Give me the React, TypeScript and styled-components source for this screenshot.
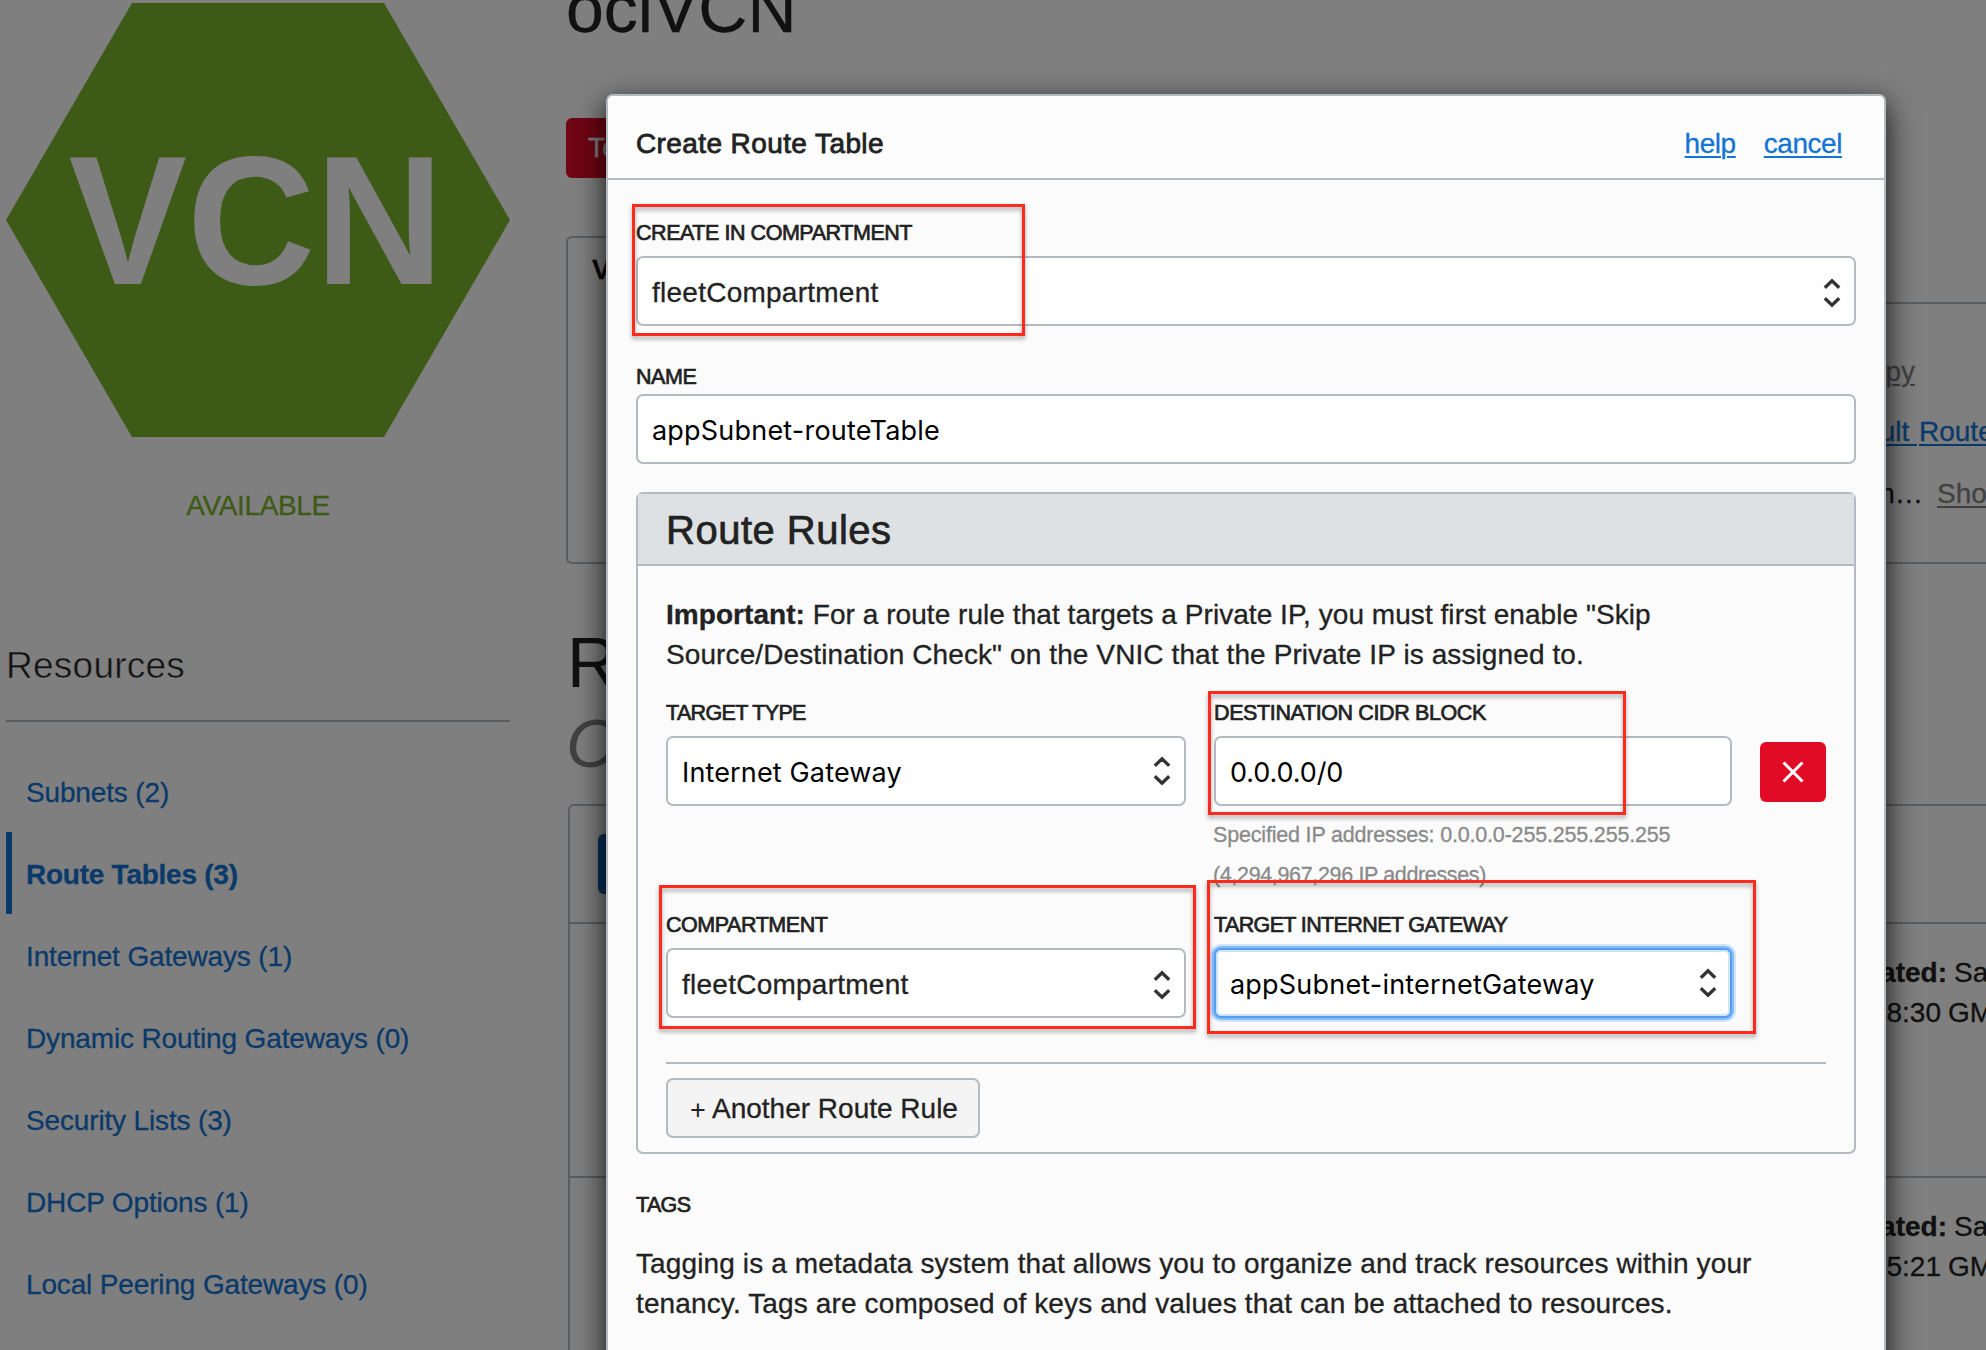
import React from 'react';
import styled, { createGlobalStyle, css } from 'styled-components';

const SANS = '"Liberation Sans", Arial, sans-serif';
const CONTROL = 'Inter, "Liberation Sans", sans-serif';
const BLUE = '#1474d4';
const LINE = '#b5bac0';
const INK = '#222';

const GlobalStyle = createGlobalStyle`
  *, *::before, *::after { box-sizing: border-box; }
  body { margin: 0; background: #fff; overflow: hidden; }
`;

/* ---------- page behind the dialog ---------- */

const Screen = styled.div`
  position: relative;
  width: 1986px;
  height: 1350px;
  overflow: hidden;
  background: #fff;
  font: 28px/40px ${SANS};
  color: ${INK};
  -webkit-text-stroke-width: 0.3px;
`;

const Page = styled.div`
  display: grid;
  grid-template-columns: 504px 1fr;
  column-gap: 56px;
  height: 1350px;
  padding-left: 6px;
`;

const Sidebar = styled.aside`
  padding-top: 3px;
`;

const Hexagon = styled.svg`
  display: block;
  width: 504px;
  height: 434px;
`;

const Status = styled.div`
  margin-top: 49px;
  line-height: 40px;
  text-align: center;
  color: #7ab42c;
  letter-spacing: -0.35px;
`;

const ResourcesTitle = styled.h2`
  margin: 119px 0 0;
  height: 77px;
  padding-top: 1px;
  border-bottom: 2px solid ${LINE};
  font-size: 37px;
  font-weight: 400;
  line-height: 40px;
  letter-spacing: 0.25px;
  -webkit-text-stroke: 0.5px #fff;
`;

const Nav = styled.nav`
  display: flex;
  flex-direction: column;
  margin-top: 28px;
`;

const NavItem = styled.a<{ $active?: boolean }>`
  height: 82px;
  padding: 3px 0 0 14px;
  border-left: 6px solid ${(p) => (p.$active ? BLUE : 'transparent')};
  line-height: 80px;
  color: ${BLUE};
  font-weight: ${(p) => (p.$active ? 700 : 400)};
  letter-spacing: ${(p) => (p.$active ? '-0.25px' : '-0.15px')};
  white-space: nowrap;
`;

const Main = styled.main`
  display: flex;
  flex-direction: column;
  min-width: 0;
  white-space: nowrap;
`;

const PageTitle = styled.h1`
  margin: -32px 0 0;
  height: 150px;
  font-size: 68px;
  font-weight: 400;
  line-height: 80px;
`;

const Terminate = styled.button`
  align-self: flex-start;
  height: 60px;
  padding: 0 22px;
  border: 0;
  border-radius: 6px;
  background: #e10b26;
  color: #fff;
  font: 28px/60px ${SANS};
`;

/* The open tab covers the panel's top edge so the two read as one box. */
const Tab = styled.div`
  position: relative;
  align-self: flex-start;
  height: 68px;
  margin: 58px 0 -2px;
  padding: 9px 24px 0;
  border: 2px solid ${LINE};
  border-bottom: 0;
  border-radius: 6px 6px 0 0;
  background: #fff;
  font-weight: 700;
  line-height: 46px;
  color: #111;
`;

const InfoPanel = styled.section`
  display: flex;
  flex-direction: column;
  height: 262px;
  padding-top: 48px;
  border: solid ${LINE};
  border-width: 2px 0 2px 2px;
  border-radius: 0 0 0 6px;
`;

const Fact = styled.div<{ $top?: number }>`
  display: grid;
  grid-template-columns: 1347px 1fr;
  margin-top: ${(p) => p.$top ?? 0}px;
`;

const FactEnd = styled.div<{ $spacing?: number; $shift?: number }>`
  text-align: right;
  letter-spacing: ${(p) => p.$spacing ?? 0}px;
  margin-right: ${(p) => -(p.$shift ?? 0)}px;
`;

const PageLink = styled.a<{ $muted?: boolean; $gap?: number }>`
  margin-left: ${(p) => p.$gap ?? 0}px;
  color: ${(p) => (p.$muted ? '#858585' : BLUE)};
  text-decoration: underline;
  text-decoration-thickness: 2px;
  text-underline-offset: 3px;
`;

const SectionTitle = styled.h2`
  margin: 59px 0 0 1px;
  height: 79px;
  font-size: 70px;
  font-weight: 400;
  line-height: 80px;
  -webkit-text-stroke-width: 0;
`;

const SectionScope = styled.div`
  height: 102px;
  font-size: 69px;
  font-style: italic;
  line-height: 84px;
  color: #858585;
  -webkit-text-stroke-width: 0;
`;

const List = styled.section`
  flex: 1;
  margin-left: 2px;
  border: solid ${LINE};
  border-width: 2px 0 0 2px;
  border-radius: 6px 0 0 0;
`;

const Toolbar = styled.div`
  height: 118px;
  padding: 28px;
  border-bottom: 2px solid ${LINE};
`;

const CreateButton = styled.button`
  display: block;
  width: 250px;
  height: 60px;
  border: 0;
  border-radius: 6px;
  background: #0a64b4;
`;

const Record = styled.div`
  display: grid;
  grid-template-columns: 1377px 1fr;
  column-gap: 7px;
  height: 254px;
  padding-top: 29px;
  border-bottom: 2px solid ${LINE};
  align-content: start;

  & > :nth-child(odd) { text-align: right; }
`;

const Time = styled.span`
  padding-right: 6px;
`;

const Zone = styled.span`
  margin-left: -6px;
`;

/* ---------- dialog ---------- */

const Backdrop = styled.div`
  position: absolute;
  inset: 0;
  padding: 94px 0 0 606px;
  background: rgba(0, 0, 0, 0.502);
`;

const Dialog = styled.div`
  width: 1280px;
  height: 1300px;
  border: 2px solid ${LINE};
  border-radius: 7px;
  background: #fbfbfb;
  box-shadow: 0 10px 30px rgba(0, 0, 0, 0.88);
`;

const DialogHeader = styled.header`
  display: flex;
  align-items: center;
  height: 84px;
  padding: 13px 42px 0 28px;
  border-bottom: 2px solid ${LINE};
  border-radius: 5px 5px 0 0;
  background: #fdfdfd;
`;

const DialogTitle = styled.h3`
  flex: 1;
  margin: 0;
  font-size: 28px;
  font-weight: 400;
  line-height: 40px;
  letter-spacing: 0.4px;
  -webkit-text-stroke: 0.8px ${INK};
`;

const DialogLink = styled.a`
  margin-left: 28px;
  color: ${BLUE};
  letter-spacing: -0.45px;
  text-decoration: underline;
  text-decoration-thickness: 2px;
  text-underline-offset: 3px;
`;

const DialogBody = styled.div`
  padding: 32px 28px 0;
`;

const Label = styled.div<{ $top?: number; $gap?: number; $spacing?: number }>`
  margin: ${(p) => p.$top ?? 0}px 0 ${(p) => p.$gap ?? 3}px;
  padding-top: 1px;
  font-size: 21.5px;
  line-height: 40px;
  letter-spacing: ${(p) => p.$spacing ?? -0.45}px;
  white-space: nowrap;
  -webkit-text-stroke: 0.7px ${INK};
`;

const focusRing = css`
  border-color: #559ff3;
  box-shadow: 0 0 0 2px #86bbf8, 0 0 0 4px #d0e4fc, inset 0 0 0 2px #cfe4fc;
`;

const Field = styled.div<{ $native?: boolean; $focused?: boolean; $spacing?: number }>`
  display: flex;
  align-items: center;
  justify-content: space-between;
  height: 70px;
  padding: 3px 14px 0;
  border: 2px solid ${LINE};
  border-radius: 7px;
  background: #fff;
  font-family: ${(p) => (p.$native ? CONTROL : SANS)};
  font-size: ${(p) => (p.$native ? 27 : 28)}px;
  color: ${(p) => (p.$native ? '#000' : INK)};
  letter-spacing: ${(p) => p.$spacing ?? 0}px;
  ${(p) => p.$native && '-webkit-text-stroke-width: 0;'}
  ${(p) => p.$focused && focusRing}
`;

const ArrowsSvg = styled.svg<{ $raised?: boolean }>`
  display: block;
  width: 18px;
  height: 30px;
  margin: ${(p) => (p.$raised ? '-3px' : '1px')} -1px 0 auto;
`;

const Arrows = ({ raised }: { raised?: boolean }) => (
  <ArrowsSvg $raised={raised} viewBox="0 0 18 30" fill="none" stroke="#333" strokeWidth="3.3">
    <path d="M1.800 9.800 9 2.800 16.200 9.800M1.800 20.200 9 27.200 16.200 20.200" />
  </ArrowsSvg>
);

const Panel = styled.section`
  margin-top: 28px;
  border: 2px solid ${LINE};
  border-radius: 7px;
`;

const PanelTitle = styled.h4`
  margin: 0;
  height: 72px;
  padding: 1px 28px 0;
  border-bottom: 2px solid ${LINE};
  background: #dee1e4;
  font-size: 40px;
  font-weight: 400;
  line-height: 70px;
  letter-spacing: 0.5px;
  -webkit-text-stroke: 0.7px ${INK};
`;

const PanelBody = styled.div`
  padding: 29px 28px 14px;
`;

const Line = styled.div<{ $spacing?: number }>`
  letter-spacing: ${(p) => p.$spacing ?? 0}px;
  white-space: nowrap;
`;

const RuleGrid = styled.div`
  display: grid;
  grid-template-columns: 520px 518px 66px;
  column-gap: 28px;
  align-items: start;
  padding-top: 17px;
`;

const Hint = styled.div`
  height: 80px;
  margin: 9px 0 9px -1px;
  font-size: 21.5px;
  color: #8a8a8a;
`;

const RemoveButton = styled.button`
  display: flex;
  align-items: center;
  justify-content: center;
  width: 66px;
  height: 60px;
  margin-top: 50px;
  padding: 0;
  border: 0;
  border-radius: 6px;
  background: #e10b26;
`;

const Divider = styled.div`
  height: 2px;
  margin: 44px 0 14px;
  background: ${LINE};
`;

const AddButton = styled.button`
  display: flex;
  align-items: center;
  width: 314px;
  height: 60px;
  padding: 1px 0 0 20px;
  border: 2px solid ${LINE};
  border-radius: 7px;
  background: #f4f4f4;
  color: ${INK};
  font: 28px/40px ${SANS};
  white-space: nowrap;
  -webkit-text-stroke-width: 0.3px;
`;

const Plus = styled.span`
  width: 28px;
  margin-left: -4px;
  padding-top: 3px;
  font-size: 27px;
  -webkit-text-stroke-width: 0;
`;

const TagsText = styled.div`
  margin-top: 19px;
`;

/* Callout frames drawn over the dialog fields. */
const Callout = styled.div<{ $x: number; $y: number; $w: number; $h: number }>`
  position: absolute;
  left: ${(p) => p.$x}px;
  top: ${(p) => p.$y}px;
  width: ${(p) => p.$w}px;
  height: ${(p) => p.$h}px;
  border: 3px solid #ff2a1c;
  filter: drop-shadow(0 3px 2px rgba(0, 0, 0, 0.35));
`;

const resources = [
  'Subnets (2)',
  'Route Tables (3)',
  'Internet Gateways (1)',
  'Dynamic Routing Gateways (0)',
  'Security Lists (3)',
  'DHCP Options (1)',
  'Local Peering Gateways (0)',
];

const records = ['8:30', '5:21'];

export default function App() {
  return (
    <Screen>
      <GlobalStyle />
      <Page>
        <Sidebar>
          <Hexagon viewBox="0 0 504 434">
            <polygon points="126,0 378,0 504,217 378,434 126,434 0,217" fill="#7ab42c" />
            <text
              x="62.500"
              y="281"
              fill="#fff"
              fontFamily={SANS}
              fontWeight="700"
              fontSize="184"
              textLength="375"
              lengthAdjust="spacingAndGlyphs"
            >
              VCN
            </text>
          </Hexagon>
          <Status>AVAILABLE</Status>
          <ResourcesTitle>Resources</ResourcesTitle>
          <Nav>
            {resources.map((name, i) => (
              <NavItem key={name} $active={i === 1}>{name}</NavItem>
            ))}
          </Nav>
        </Sidebar>
        <Main>
          <PageTitle>ociVCN</PageTitle>
          <Terminate>Terminate</Terminate>
          <Tab>VCN Information</Tab>
          <InfoPanel>
            <Fact>
              <FactEnd><PageLink $muted>Copy</PageLink></FactEnd>
            </Fact>
            <Fact $top={20}>
              <FactEnd $shift={2}><PageLink>Default&nbsp;</PageLink></FactEnd>
              <PageLink $gap={4}>Route</PageLink>
            </Fact>
            <Fact $top={22}>
              <FactEnd $spacing={1.2} $shift={8}>n...</FactEnd>
              <PageLink $muted $gap={22}>Show</PageLink>
            </Fact>
          </InfoPanel>
          <SectionTitle>Route Tables</SectionTitle>
          <SectionScope>Compartment</SectionScope>
          <List>
            <Toolbar><CreateButton /></Toolbar>
            {records.map((time) => (
              <Record key={time}>
                <b>Created:</b>
                <span>Sat</span>
                <Time>{time}</Time>
                <Zone>GMT</Zone>
              </Record>
            ))}
          </List>
        </Main>
      </Page>

      <Backdrop>
        <Dialog>
          <DialogHeader>
            <DialogTitle>Create Route Table</DialogTitle>
            <DialogLink>help</DialogLink>
            <DialogLink>cancel</DialogLink>
          </DialogHeader>
          <DialogBody>
            <Label>CREATE IN COMPARTMENT</Label>
            <Field $spacing={0.25}>fleetCompartment<Arrows /></Field>
            <Label $top={30} $gap={-3}>NAME</Label>
            <Field $native $spacing={0.2}>appSubnet-routeTable</Field>
            <Panel>
              <PanelTitle>Route Rules</PanelTitle>
              <PanelBody>
                <Line $spacing={0.05}><b>Important:</b> For a route rule that targets a Private IP, you must first enable "Skip</Line>
                <Line $spacing={0.1}>Source/Destination Check" on the VNIC that the Private IP is assigned to.</Line>
                <RuleGrid>
                  <div>
                    <Label $spacing={-0.65}>TARGET TYPE</Label>
                    <Field $native $spacing={0.15}>Internet Gateway<Arrows raised /></Field>
                  </div>
                  <div>
                    <Label $spacing={-0.38}>DESTINATION CIDR BLOCK</Label>
                    <Field $native $spacing={-0.1}>0.0.0.0/0</Field>
                    <Hint>
                      <Line $spacing={-0.18}>Specified IP addresses: 0.0.0.0-255.255.255.255</Line>
                      <Line $spacing={-0.35}>(4,294,967,296 IP addresses)</Line>
                    </Hint>
                  </div>
                  <RemoveButton>
                    <svg width="22" height="22" viewBox="0 0 22 22" stroke="#fff" strokeWidth="3">
                      <path d="M1.500 1.500 20.500 20.500M20.500 1.500 1.500 20.500" />
                    </svg>
                  </RemoveButton>
                  <div>
                    <Label>COMPARTMENT</Label>
                    <Field $spacing={0.25}>fleetCompartment<Arrows /></Field>
                  </div>
                  <div>
                    <Label $spacing={-0.62}>TARGET INTERNET GATEWAY</Label>
                    <Field $native $focused $spacing={0.2}>appSubnet-internetGateway<Arrows raised /></Field>
                  </div>
                </RuleGrid>
                <Divider />
                <AddButton><Plus>+</Plus>Another Route Rule</AddButton>
              </PanelBody>
            </Panel>
            <Label $top={30} $gap={0} $spacing={-0.65}>TAGS</Label>
            <TagsText>
              <Line $spacing={0.12}>Tagging is a metadata system that allows you to organize and track resources within your</Line>
              <Line $spacing={0.13}>tenancy. Tags are composed of keys and values that can be attached to resources.</Line>
            </TagsText>
          </DialogBody>
        </Dialog>
      </Backdrop>

      <Callout $x={632} $y={204} $w={393} $h={132} />
      <Callout $x={1208} $y={691} $w={418} $h={124} />
      <Callout $x={659} $y={885} $w={537} $h={144} />
      <Callout $x={1207} $y={880} $w={549} $h={154} />
    </Screen>
  );
}
